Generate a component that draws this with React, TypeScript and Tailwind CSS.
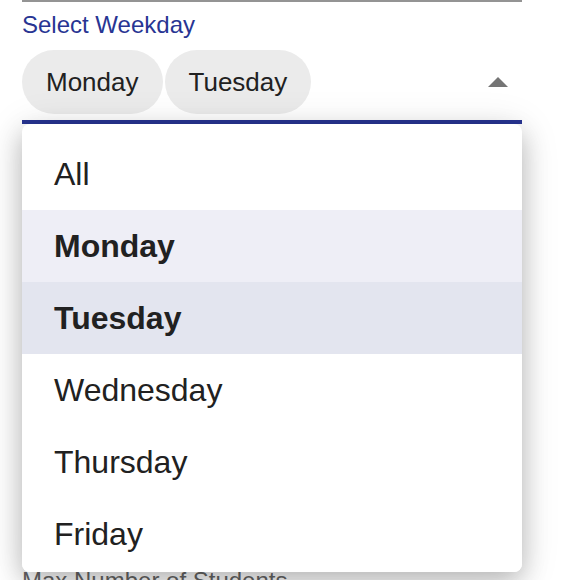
import React from 'react';

const days = ['All', 'Monday', 'Tuesday', 'Wednesday', 'Thursday', 'Friday', 'Saturday', 'Sunday'];
const selected = ['Monday', 'Tuesday'];

export default function App() {
  return (
    <div className="relative w-[562px] h-[580px] overflow-hidden bg-white font-['Liberation_Sans',Arial,sans-serif]">
      <div className="ml-[22px] w-[500px]">
        <div className="h-[2px] bg-[#949494]" />
        <label className="block mt-[11px] text-[24px] leading-6 text-[#283593]">Select Weekday</label>
        <div className="flex items-center mt-[13px]">
          <div className="flex gap-[2px]">
            {selected.map((d) => (
              <span
                key={d}
                className="h-16 px-6 flex items-center rounded-full bg-[#ebebeb] text-[26px] text-[#212121]"
              >
                {d}
              </span>
            ))}
          </div>
          <svg className="ml-auto mr-[14px]" width="20" height="10" viewBox="0 0 20 10">
            <polygon points="0,10 10,0 20,10" fill="#757575" />
          </svg>
        </div>
        <div className="mt-[6px] h-[4px] bg-[#283593]" />
        <p className="mt-[445px] text-[24px] leading-6 text-[#666666] whitespace-nowrap">Max Number of Students</p>
      </div>

      {/* dropdown menu */}
      <ul className="absolute left-[22px] top-[124px] w-[500px] h-[448px] overflow-hidden rounded-[8px] bg-white pt-[14px] shadow-[0_10px_26px_rgba(0,0,0,0.22),0_4px_40px_rgba(0,0,0,0.12)]">
        {days.map((d) => {
          const isSel = selected.includes(d);
          const bg = d === 'Monday' ? 'bg-[#eeeef6]' : d === 'Tuesday' ? 'bg-[#e3e5ef]' : 'bg-white';
          return (
            <li
              key={d}
              className={`h-[72px] px-8 flex items-center text-[32px] text-[#212121] ${bg} ${isSel ? 'font-bold' : ''}`}
            >
              {d}
            </li>
          );
        })}
      </ul>
    </div>
  );
}
